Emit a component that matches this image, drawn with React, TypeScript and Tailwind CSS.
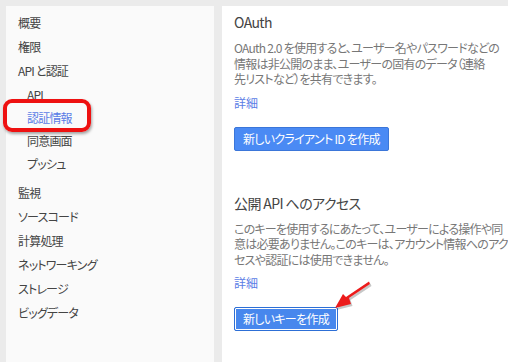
const navItems = [
  { label: '概要', level: 0 },
  { label: '権限', level: 0 },
  { label: 'API と認証', level: 0 },
  { label: 'API', level: 1 },
  { label: '認証情報', level: 1, active: true },
  { label: '同意画面', level: 1 },
  { label: 'プッシュ', level: 1 },
  { label: '監視', level: 0, gap: true },
  { label: 'ソースコード', level: 0 },
  { label: '計算処理', level: 0 },
  { label: 'ネットワーキング', level: 0 },
  { label: 'ストレージ', level: 0 },
  { label: 'ビッグデータ', level: 0 },
]

function Sidebar() {
  return (
    <nav className="relative w-[208px] shrink-0 bg-[#fafafa] pt-[5px] tracking-[-0.8px]">
      <ul>
        {navItems.map((item) => (
          <li
            key={item.label}
            className={[
              item.level === 1 ? 'h-[23px] leading-[23px] pl-[21px]' : 'h-6 leading-6 pl-3',
              item.gap ? 'mt-[6px]' : '',
              item.active ? 'text-[#5b7de6]' : 'text-[#444]',
            ].join(' ')}
          >
            {item.label}
          </li>
        ))}
      </ul>
      {/* red highlight drawn over the active item */}
      <div className="absolute left-[-3px] top-[93px] h-[33px] w-[88px] rounded-[9px] border-[4px] border-[#ee1111] shadow-[1px_2px_3px_rgba(0,0,0,0.35)]" />
    </nav>
  )
}

interface SectionProps {
  title: string
  lines: string[]
  action: string
  focused?: boolean
}

function Section({ title, lines, action, focused }: SectionProps) {
  return (
    <section>
      <h2 className="h-5 text-[14px] leading-5 tracking-[-0.6px] text-[#444]">{title}</h2>
      <p className="mt-2 text-[12px] leading-[15.5px] tracking-[-0.75px] text-[#777]">
        {lines.map((line) => (
          <span key={line} className="block whitespace-nowrap">
            {line}
          </span>
        ))}
      </p>
      <a className="mt-2 block h-4 text-[12px] leading-4 text-[#5b7de6]">詳細</a>
      <button
        className={[
          'mt-4 block h-6 rounded-[2px] border px-2 text-[12px] leading-[22px] tracking-[-0.7px] text-white',
          focused
            ? 'border-[#2d6fd6] bg-[#4787ed] shadow-[inset_0_0_0_1px_#ffffff]'
            : 'border-[#3b76d9] bg-[#4a8af4]',
        ].join(' ')}
      >
        {action}
      </button>
    </section>
  )
}

export default function App() {
  return (
    <div className="flex h-[362px] w-[508px] gap-2 overflow-hidden bg-[#ebebeb] pl-[6px] pt-[6px] font-['Noto_Sans_CJK_JP',sans-serif] text-[12px] [font-feature-settings:'palt']">
      <Sidebar />
      <main className="relative flex-1 bg-white px-3 pt-[6px]">
        <Section
          title="OAuth"
          lines={[
            'OAuth 2.0 を使用すると、ユーザー名やパスワードなどの',
            '情報は非公開のまま、ユーザーの固有のデータ（連絡',
            '先リストなど）を共有できます。',
          ]}
          action="新しいクライアント ID を作成"
        />
        <div className="mt-[42px]">
          <Section
            title="公開 API へのアクセス"
            lines={[
              'このキーを使用するにあたって、ユーザーによる操作や同',
              '意は必要ありません。このキーは、アカウント情報へのアク',
              'セスや認証には使用できません。',
            ]}
            action="新しいキーを作成"
            focused
          />
        </div>
        {/* red pointer arrow */}
        <svg
          className="absolute left-[108px] top-[272px]"
          width="44"
          height="36"
          viewBox="0 0 44 36"
        >
          <polygon points="40,6 19,20 21,26 5,30 13,16 16,19 39,3.5" fill="rgba(0,0,0,0.22)" transform="translate(1.5,2)" />
          <polygon points="40,6 19,20 21,26 5,30 13,16 16,19 39,3.5" fill="#ec1b1b" />
        </svg>
      </main>
    </div>
  )
}
